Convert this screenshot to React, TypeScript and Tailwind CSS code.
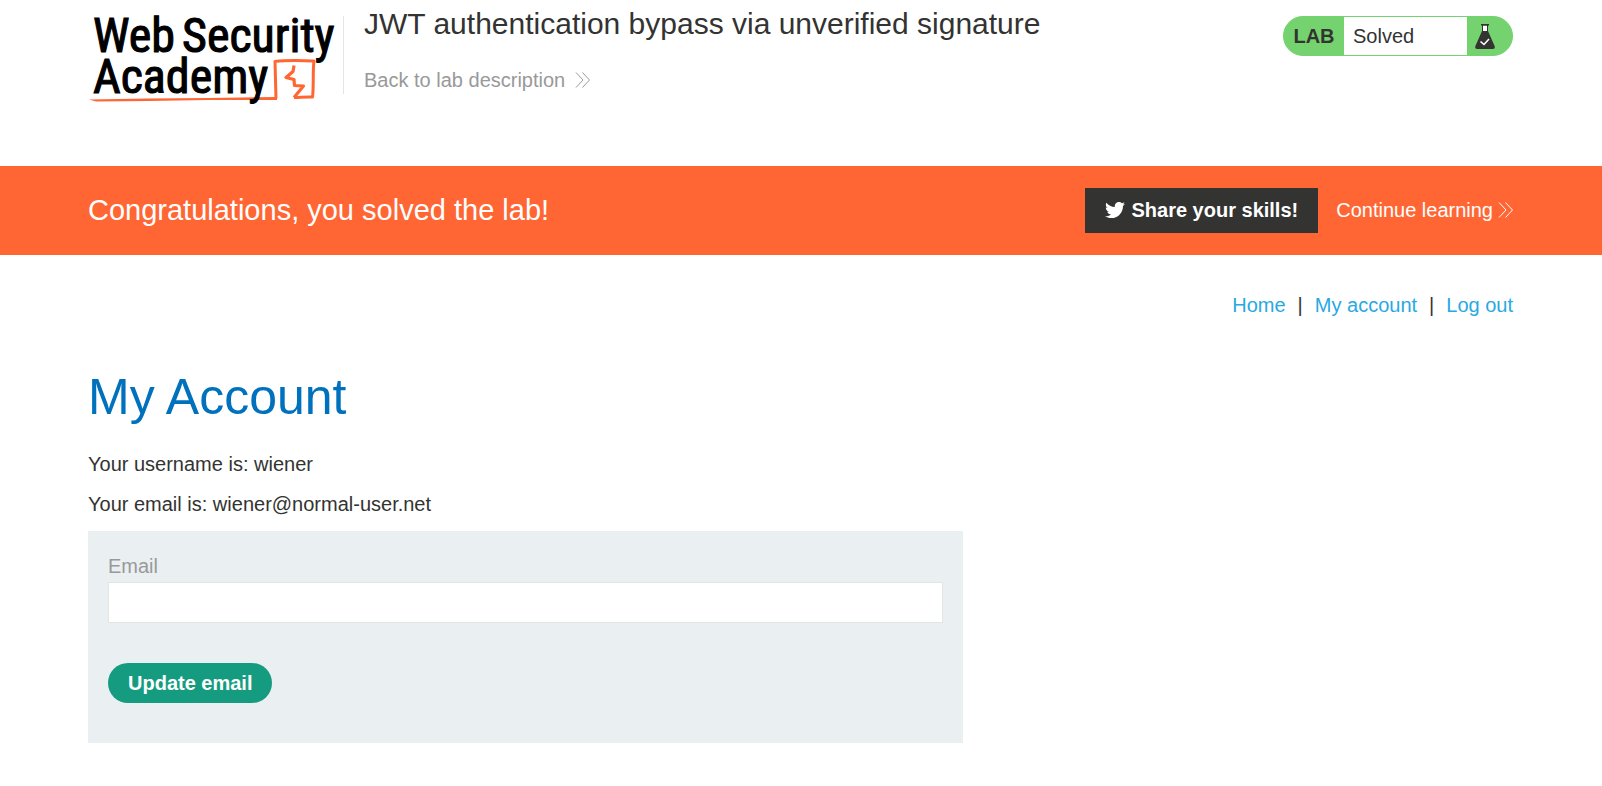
import { FaTwitter } from "react-icons/fa";

function Chevrons({ className }: { className: string }) {
  return (
    <svg viewBox="0 0 15 16" className={className} fill="none" stroke="currentColor" strokeWidth="1" aria-hidden="true">
      <path d="M1 0.5 L8 8 L1 15.5 M7.5 0.5 L14.5 8 L7.5 15.5" />
    </svg>
  );
}

function Logo() {
  return (
    <svg viewBox="0 0 251 94" className="block h-[94px] w-[251px] overflow-visible" role="img" aria-label="Web Security Academy">
      <g fill="none" stroke="#ff6633" strokeLinejoin="round">
        <path d="M188 86.5 L187 49.5 C200 48 212 48.5 226 49 C224.5 60 226 73 224.5 85 C218 84.5 212 85.5 206 85.5" strokeWidth="3" />
        <path d="M206 53.5 L205 59.5 L198 65.5 L206 67.5 L206.5 73.5 L215.5 74 L206 85.5" strokeWidth="3.2" />
      </g>
      <path d="M1 87.5 L60 86.5 L120 86 L189 85 L189 88 L120 88 L60 89 L8 89.5 Z" fill="#ff6633" />
      <g fill="#000" stroke="#000" strokeWidth="1.1" fontSize="48" fontFamily="'Roboto Condensed','Liberation Sans',sans-serif">
        <text x="5" y="40">Web</text>
        <text x="94" y="40">Security</text>
        <text x="5" y="81">Academy</text>
      </g>
    </svg>
  );
}

function LabStatus() {
  return (
    <div className="mt-4 flex h-10 w-[230px] shrink-0 overflow-hidden rounded-full border border-[#74d36f] bg-[#74d36f]">
      <span className="flex w-[60px] items-center justify-center font-bold">LAB</span>
      <span className="flex flex-1 items-center bg-white pl-[9px]">Solved</span>
      <span className="flex w-[45px] items-center pl-2">
        <svg viewBox="0 0 20 25" className="h-[25px] w-5" aria-hidden="true">
          <path d="M7.5 1 V9 H12.5 V1 Z" fill="#fff" stroke="#333332" />
          <path d="M6 0 H14 V1.5 H6 Z M7 7 H13 L19.8 22.5 Q20.2 25 18 25 H2 Q-0.2 25 0.2 22.5 Z" fill="#333332" />
          <path d="M5.5 17.5 L9 20.5 L14 15" fill="none" stroke="#fff" strokeWidth="1.6" />
        </svg>
      </span>
    </div>
  );
}

export default function App() {
  return (
    <div className="font-['Liberation_Sans',Arial,sans-serif] text-xl text-[#333332]">
      <header className="flex min-h-[166px] items-start pr-[89px] pl-[88px]">
        <a href="#academy" className="mt-3 shrink-0">
          <Logo />
        </a>
        <div className="mt-4 ml-1 h-[78px] w-px bg-[#e5e5e5]" />
        <div className="ml-5 flex-1 pt-1">
          <h2 className="text-3xl leading-10">JWT authentication bypass via unverified signature</h2>
          <a href="#lab" className="mt-[22px] inline-flex items-center gap-2.5 text-[#999]">
            Back to lab description
            <Chevrons className="h-4 w-[15px]" />
          </a>
        </div>
        <LabStatus />
      </header>

      <section className="flex min-h-[89px] items-center bg-[#ff6633] pr-[89px] pl-[88px] text-white">
        <h4 className="flex-1 text-[29px]">Congratulations, you solved the lab!</h4>
        <button className="flex h-[45px] items-center gap-1.5 bg-[#333332] px-5 pb-0.5 font-bold">
          <FaTwitter className="size-5" />
          Share your skills!
        </button>
        <a href="#learning" className="ml-[18px] flex items-center gap-[5px] pb-0.5">
          Continue learning
          <Chevrons className="h-4 w-[15px]" />
        </a>
      </section>

      <main className="pr-[89px] pl-[88px]">
        <nav className="flex justify-end gap-3 pt-9">
          <a href="#home" className="text-[#29a9e1]">Home</a>
          <span>|</span>
          <a href="#account" className="text-[#29a9e1]">My account</a>
          <span>|</span>
          <a href="#logout" className="text-[#29a9e1]">Log out</a>
        </nav>
        <h1 className="mt-12 text-[50px] leading-[60px] text-[#0071bd]">My Account</h1>
        <p className="mt-[27px] leading-5">Your username is: wiener</p>
        <p className="mt-5 leading-5">Your email is: wiener@normal-user.net</p>
        <form className="mt-[17px] max-w-[875px] bg-[#eaeff2] px-5 pt-5 pb-10" onSubmit={(e) => e.preventDefault()}>
          <label htmlFor="email" className="block leading-[31px] text-[#999]">Email</label>
          <input id="email" type="email" className="block h-[41px] w-full border border-[#e3e5e4] bg-white px-2" />
          <button type="submit" className="mt-10 h-10 rounded-full bg-[#159c80] px-5 font-bold text-white">Update email</button>
        </form>
      </main>
    </div>
  );
}
